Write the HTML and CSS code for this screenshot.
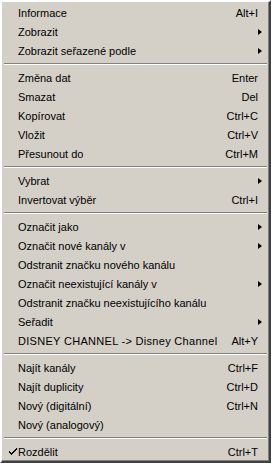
FILE: index.html
```html
<!DOCTYPE html>
<html lang="cs">
<head>
  <meta charset="UTF-8">
  <title>Menu</title>
  <link rel="stylesheet" href="styles.css">
</head>
<body>
  <div class="menu">
    <div class="item"><span class="label">Informace</span><span class="key">Alt+I</span></div>
    <div class="item"><span class="label">Zobrazit</span><span class="arrow"></span></div>
    <div class="item"><span class="label">Zobrazit seřazené podle</span><span class="arrow"></span></div>
    <div class="sep"></div>
    <div class="item"><span class="label">Změna dat</span><span class="key">Enter</span></div>
    <div class="item"><span class="label">Smazat</span><span class="key">Del</span></div>
    <div class="item"><span class="label">Kopírovat</span><span class="key">Ctrl+C</span></div>
    <div class="item"><span class="label">Vložit</span><span class="key">Ctrl+V</span></div>
    <div class="item"><span class="label">Přesunout do</span><span class="key">Ctrl+M</span></div>
    <div class="sep"></div>
    <div class="item"><span class="label">Vybrat</span><span class="arrow"></span></div>
    <div class="item"><span class="label">Invertovat výběr</span><span class="key">Ctrl+I</span></div>
    <div class="sep"></div>
    <div class="item"><span class="label">Označit jako</span><span class="arrow"></span></div>
    <div class="item"><span class="label">Označit nové kanály v</span><span class="arrow"></span></div>
    <div class="item"><span class="label">Odstranit značku nového kanálu</span></div>
    <div class="item"><span class="label">Označit neexistující kanály v</span><span class="arrow"></span></div>
    <div class="item"><span class="label">Odstranit značku neexistujícího kanálu</span></div>
    <div class="item"><span class="label">Seřadit</span><span class="arrow"></span></div>
    <div class="item"><span class="label caps">DISNEY CHANNEL -&gt; Disney Channel</span><span class="key">Alt+Y</span></div>
    <div class="sep"></div>
    <div class="item"><span class="label">Najít kanály</span><span class="key">Ctrl+F</span></div>
    <div class="item"><span class="label">Najít duplicity</span><span class="key">Ctrl+D</span></div>
    <div class="item"><span class="label">Nový (digitální)</span><span class="key">Ctrl+N</span></div>
    <div class="item"><span class="label">Nový (analogový)</span></div>
    <div class="sep"></div>
    <div class="item checked">
      <svg class="check" width="8" height="7" viewBox="0 0 8 7"><path d="M0 3h1v1h1v1h1V4h1V3h1V2h1V1h1V0h1v2H7v1H6v1H5v1H4v1H3v1H2V6H1V5H0z" fill="#000"/></svg>
      <span class="label">Rozdělit</span><span class="key">Ctrl+T</span>
    </div>
  </div>
</body>
</html>
```

FILE: styles.css
```css
body { margin: 0; background-color: #d4d0c8; }
.menu {
  box-sizing: border-box;
  width: 271px;
  height: 463px;
  padding: 1px 1px 0;
  background-color: #d4d0c8;
  border: 2px solid;
  border-color: #ffffff #404040 #404040 #ffffff;
  box-shadow: inset -1px -1px 0 #808080, inset 1px 1px 0 #d4d0c8;
  font-family: "Liberation Sans", Arial, sans-serif;
  font-size: 11px;
  color: #000;
}
.item {
  position: relative;
  display: flex;
  align-items: center;
  height: 19px;
  padding: 0 10px 0 15px;
}
.label { flex: 1; white-space: nowrap; }
.caps { letter-spacing: 0.3px; }
.key { white-space: nowrap; }
.arrow {
  width: 0;
  height: 0;
  margin-right: -4px;
  border-top: 3.5px solid transparent;
  border-bottom: 3.5px solid transparent;
  border-left: 4px solid #000;
}
.check { position: absolute; left: 6px; top: 6px; }
.sep {
  height: 8px;
  box-sizing: border-box;
  padding-top: 3px;
}
.sep::before {
  content: "";
  display: block;
  margin: 0 1px;
  height: 1px;
  background-color: #808080;
  border-bottom: 1px solid #ffffff;
}
```
